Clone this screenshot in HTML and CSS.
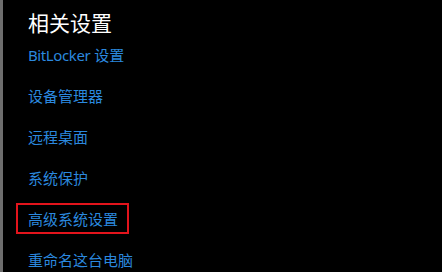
FILE: index.html
```html
<!DOCTYPE html>
<html lang="zh-CN">
<head>
<meta charset="utf-8">
<title>相关设置</title>
<link rel="stylesheet" href="styles.css">
</head>
<body>
<div class="window">
  <div class="edge"></div>
  <section class="panel">
    <h2 class="title">相关设置</h2>
    <ul class="links">
      <li><a class="link" href="#"><span class="latin">BitLocker</span> 设置</a></li>
      <li><a class="link" href="#">设备管理器</a></li>
      <li><a class="link" href="#">远程桌面</a></li>
      <li><a class="link" href="#">系统保护</a></li>
      <li><a class="link marked" href="#">高级系统设置</a></li>
      <li><a class="link" href="#">重命名这台电脑</a></li>
    </ul>
  </section>
</div>
</body>
</html>
```
FILE: styles.css
```css
html, body {
  margin: 0;
  padding: 0;
  background: #000;
}
.window {
  display: flex;
  width: 442px;
  height: 272px;
  overflow: hidden;
  background: #000;
  font-family: "Noto Sans", "Noto Sans CJK SC", sans-serif;
}
.edge {
  width: 3px;
  flex: none;
  background: #6e6e6e;
}
.panel {
  padding: 11px 0 0 25px;
}
.title {
  margin: 0;
  font-size: 21px;
  line-height: 24px;
  font-weight: 400;
  color: #fff;
}
.links {
  list-style: none;
  margin: 0;
  padding: 0;
}
.links li {
  height: 41px;
}
.link {
  position: relative;
  display: inline-block;
  font-size: 15px;
  line-height: 41px;
  color: #2b88de;
  text-decoration: none;
}
.latin {
  letter-spacing: -0.4px;
}
.marked::after {
  content: "";
  position: absolute;
  left: -12px;
  right: -11px;
  top: 4px;
  bottom: 6px;
  border: 2px solid #e3141c;
}
```
